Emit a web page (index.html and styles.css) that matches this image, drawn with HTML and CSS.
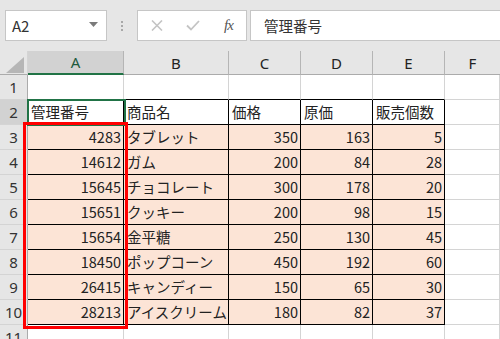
FILE: index.html
```html
<!DOCTYPE html>
<html lang="ja">
<head>
<meta charset="utf-8">
<link rel="stylesheet" href="styles.css">
</head>
<body>
<div class="app">
  <div class="toolbar">
    <div class="namebox">
      <span class="name">A2</span>
      <svg class="dd" width="9" height="5" viewBox="0 0 9 5"><path d="M0 0H9L4.5 5Z" fill="#7a7a7a"/></svg>
    </div>
    <div class="dots"><i></i><i></i><i></i></div>
    <div class="fbtns">
      <svg width="12" height="11" viewBox="0 0 12 11"><path d="M1 0.5L11 10.5M11 0.5L1 10.5" stroke="#c4c4c4" stroke-width="1.6" fill="none"/></svg>
      <svg width="14" height="11" viewBox="0 0 14 11"><path d="M1 5.5L5 9.5L13 1" stroke="#c4c4c4" stroke-width="1.8" fill="none"/></svg>
      <span class="fx">fx</span>
    </div>
    <div class="fbar">管理番号</div>
  </div>
  <div class="sheet">
    <div class="h corner"><svg width="18" height="16" viewBox="0 0 18 16"><path d="M18 0V16H0Z" fill="#b6b6b6"/></svg></div>
    <div class="h col sel">A</div>
    <div class="h col">B</div>
    <div class="h col">C</div>
    <div class="h col">D</div>
    <div class="h col">E</div>
    <div class="h col last">F</div>

    <div class="rn">1</div>
    <div class="c tt"></div><div class="c tt"></div><div class="c tt"></div><div class="c tt"></div><div class="c tt"></div><div class="c"></div>

    <div class="rn selr">2</div>
    <div class="c t">管理番号</div><div class="c t">商品名</div><div class="c t">価格</div><div class="c t">原価</div><div class="c t">販売個数</div><div class="c"></div>

    <div class="rn">3</div>
    <div class="c t f n">4283</div><div class="c t f">タブレット</div><div class="c t f n">350</div><div class="c t f n">163</div><div class="c t f n">5</div><div class="c"></div>

    <div class="rn">4</div>
    <div class="c t f n">14612</div><div class="c t f">ガム</div><div class="c t f n">200</div><div class="c t f n">84</div><div class="c t f n">28</div><div class="c"></div>

    <div class="rn">5</div>
    <div class="c t f n">15645</div><div class="c t f">チョコレート</div><div class="c t f n">300</div><div class="c t f n">178</div><div class="c t f n">20</div><div class="c"></div>

    <div class="rn">6</div>
    <div class="c t f n">15651</div><div class="c t f">クッキー</div><div class="c t f n">200</div><div class="c t f n">98</div><div class="c t f n">15</div><div class="c"></div>

    <div class="rn">7</div>
    <div class="c t f n">15654</div><div class="c t f">金平糖</div><div class="c t f n">250</div><div class="c t f n">130</div><div class="c t f n">45</div><div class="c"></div>

    <div class="rn">8</div>
    <div class="c t f n">18450</div><div class="c t f">ポップコーン</div><div class="c t f n">450</div><div class="c t f n">192</div><div class="c t f n">60</div><div class="c"></div>

    <div class="rn">9</div>
    <div class="c t f n">26415</div><div class="c t f">キャンディー</div><div class="c t f n">150</div><div class="c t f n">65</div><div class="c t f n">30</div><div class="c"></div>

    <div class="rn">10</div>
    <div class="c t f n">28213</div><div class="c t f">アイスクリーム</div><div class="c t f n">180</div><div class="c t f n">82</div><div class="c t f n">37</div><div class="c"></div>

    <div class="rn">11</div>
    <div class="c"></div><div class="c"></div><div class="c"></div><div class="c"></div><div class="c"></div><div class="c"></div>

    <div class="active"></div>
    <div class="redbox"></div>
  </div>
</div>
</body>
</html>
```

FILE: styles.css
```css
html, body {
  margin: 0;
  padding: 0;
  background: #ffffff;
}
body {
  font-family: "Noto Sans CJK JP", "Noto Sans", sans-serif;
  color: #222;
  width: 500px;
  height: 339px;
  overflow: hidden;
}
.app {
  width: 500px;
  height: 339px;
  overflow: hidden;
}
.toolbar {
  background: #e6e6e6;
  height: 51px;
  box-sizing: border-box;
  padding: 10px 0 10px 5px;
  display: flex;
  align-items: stretch;
}
.namebox {
  width: 102px;
  box-sizing: border-box;
  background: #fff;
  border: 1px solid #c6c6c6;
  display: flex;
  align-items: center;
  justify-content: space-between;
  padding: 0 8px 0 6px;
}
.name {
  font-size: 15px;
  color: #333;
  line-height: 1;
}
.dd {
  margin-top: -2px;
}
.dots {
  width: 30px;
  display: flex;
  flex-direction: column;
  align-items: center;
  justify-content: center;
  gap: 2px;
}
.dots i {
  display: block;
  width: 2px;
  height: 2px;
  background: #a8a8a8;
}
.fbtns {
  width: 110px;
  box-sizing: border-box;
  background: #fff;
  border: 1px solid #c6c6c6;
  display: flex;
  align-items: center;
  padding: 0 0 0 13px;
  gap: 23px;
}
.fx {
  font-family: "Liberation Serif", serif;
  font-style: italic;
  font-size: 15px;
  color: #555;
  margin-left: 1px;
  letter-spacing: -1px;
}
.fbar {
  flex: 1;
  margin-left: 3px;
  background: #fff;
  border: 1px solid #c6c6c6;
  border-right: none;
  font-size: 14.5px;
  color: #333;
  display: flex;
  align-items: center;
  padding-left: 13px;
}
.sheet {
  position: relative;
  display: grid;
  grid-template-columns: 28px 96px 105px 72px 72px 72px 1fr;
  grid-template-rows: 24px repeat(11, 25px);
}
.h {
  background: #e6e6e6;
  box-sizing: border-box;
  border-bottom: 1px solid #ababab;
  font-size: 15px;
  color: #222;
  display: flex;
  align-items: center;
  justify-content: center;
  font-family: "Noto Sans", sans-serif;
}
.col {
  border-right: 1px solid #b5b5b5;
}
.col.last {
  border-right: none;
}
.col.sel {
  background: #d2d2d2;
  border-bottom: 2px solid #217346;
  color: #1d5a3d;
}
.corner {
  align-items: flex-end;
  justify-content: flex-end;
  padding: 0 3px 1px 0;
  border-right: 1px solid #d4d4d4;
}
.corner svg {
  display: block;
}
.rn {
  background: #e6e6e6;
  box-sizing: border-box;
  border-right: 1px solid #ababab;
  border-bottom: 1px solid #d4d4d4;
  font-family: "Noto Sans", sans-serif;
  font-size: 15px;
  color: #333;
  display: flex;
  align-items: center;
  justify-content: center;
}
.rn.selr {
  background: #d2d2d2;
}
.c {
  box-sizing: border-box;
  border-right: 1px solid #d4d4d4;
  border-bottom: 1px solid #d4d4d4;
  font-size: 14.5px;
  line-height: 24px;
  white-space: nowrap;
  padding: 0 2px 0 3px;
  color: #222;
}
.c.tt {
  border-bottom-color: #000;
}
.c.t {
  border-right-color: #000;
  border-bottom-color: #000;
}
.c.f {
  background: #fce4d6;
}
.c.n {
  text-align: right;
}
.active {
  position: absolute;
  left: 27px;
  top: 48px;
  width: 99px;
  height: 27px;
  box-sizing: border-box;
  border: 2px solid #217346;
}
.redbox {
  position: absolute;
  left: 23px;
  top: 71px;
  width: 105px;
  height: 207px;
  box-sizing: border-box;
  border: 3px solid #ff0000;
}
```
